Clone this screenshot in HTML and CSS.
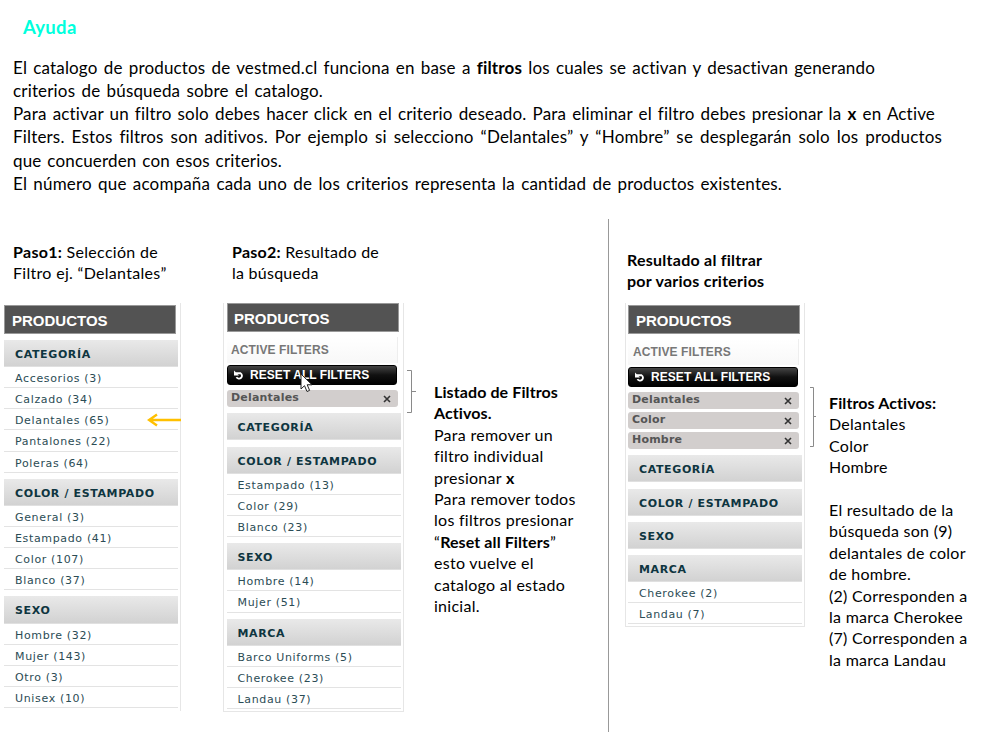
FILE: index.html
```html
<!DOCTYPE html>
<html lang="es">
<head>
<meta charset="utf-8">
<title>Ayuda</title>
<link rel="stylesheet" href="styles.css">
</head>
<body>
<h1>Ayuda</h1>
<div class="intro">
  <p class="w862">El catalogo de productos de vestmed.cl funciona en base a <b>filtros</b> los cuales se activan y desactivan generando</p>
  <p class="w310">criterios de búsqueda sobre el catalogo.</p>
  <p class="w922">Para activar un filtro solo debes hacer click en el criterio deseado. Para eliminar el filtro debes presionar la <b>x</b> en Active</p>
  <p class="w929">Filters. Estos filtros son aditivos. Por ejemplo si selecciono “Delantales” y “Hombre” se desplegarán solo los productos</p>
  <p class="w269">que concuerden con esos criterios.</p>
  <p class="w769">El número que acompaña cada uno de los criterios representa la cantidad de productos existentes.</p>
</div>

<main class="steps">
  <section class="step one">
    <h2><b>Paso1:</b> Selección de<br>Filtro ej. “Delantales”</h2>
    <div class="panel">
      <div class="title">PRODUCTOS</div>
      <div class="group"><h3>CATEGORÍA</h3>
        <ul><li>Accesorios (3)</li><li>Calzado (34)</li><li>Delantales (65)
          <svg class="arrow" width="34" height="14" viewBox="0 0 34 14"><path d="M34 7H2M10 1.500L2 7l8 5.500" fill="none" stroke="#ffc000" stroke-width="2.400"/></svg></li><li>Pantalones (22)</li><li>Poleras (64)</li></ul></div>
      <div class="group"><h3>COLOR / ESTAMPADO</h3>
        <ul><li>General (3)</li><li>Estampado (41)</li><li>Color (107)</li><li>Blanco (37)</li></ul></div>
      <div class="group"><h3>SEXO</h3>
        <ul><li>Hombre (32)</li><li>Mujer (143)</li><li>Otro (3)</li><li>Unisex (10)</li></ul></div>
    </div>
  </section>

  <section class="step two">
    <h2><b>Paso2:</b> Resultado de<br>la búsqueda</h2>
    <div class="panel">
      <div class="title">PRODUCTOS</div>
      <div class="active">ACTIVE FILTERS</div>
      <div class="reset"><svg width="11" height="11" viewBox="0 0 11 11"><path d="M1.500 3.200H6.500a2.900 2.900 0 1 1-4 3.900" fill="none" stroke="#fff" stroke-width="1.900"/><path d="M0 .6v5h5z" fill="#fff"/></svg><span>RESET ALL FILTERS</span>
        <svg class="cursor" width="13" height="20" viewBox="0 0 13 20"><path d="M1 1v15l3.500-3.300L7 18.500l2.600-1.100L7.200 11.800H12z" fill="#fff" stroke="#222"/></svg></div>
      <div class="chip"><span>Delantales</span><svg width="8" height="8" viewBox="0 0 8 8"><path d="M1 1l6 6M7 1L1 7" stroke="#333" stroke-width="1.600"/></svg></div>
      <div class="group"><h3>CATEGORÍA</h3></div>
      <div class="group"><h3>COLOR / ESTAMPADO</h3>
        <ul><li>Estampado (13)</li><li>Color (29)</li><li>Blanco (23)</li></ul></div>
      <div class="group"><h3>SEXO</h3>
        <ul><li>Hombre (14)</li><li>Mujer (51)</li></ul></div>
      <div class="group"><h3>MARCA</h3>
        <ul><li>Barco Uniforms (5)</li><li>Cherokee (23)</li><li>Landau (37)</li></ul></div>
    </div>
  </section>

  <aside class="note list">
    <svg class="bracket" width="9" height="43" viewBox="0 0 9 43"><path d="M0 .5H4.500V42.500H0M4.500 21.500H9" fill="none" stroke="#8a8a8a"/></svg>
    <div class="text"><p><b>Listado de Filtros</b></p><p><b>Activos.</b></p><p>Para remover un</p><p>filtro individual</p><p>presionar <b>x</b></p><p>Para remover todos</p><p>los filtros presionar</p><p>“<b>Reset all Filters</b>”</p><p>esto vuelve el</p><p>catalogo al estado</p><p>inicial.</p></div>
  </aside>

  <div class="divider"></div>

  <section class="step three">
    <h2><b>Resultado al filtrar<br>por varios criterios</b></h2>
    <div class="panel">
      <div class="title">PRODUCTOS</div>
      <div class="active">ACTIVE FILTERS</div>
      <div class="reset"><svg width="11" height="11" viewBox="0 0 11 11"><path d="M1.500 3.200H6.500a2.900 2.900 0 1 1-4 3.900" fill="none" stroke="#fff" stroke-width="1.900"/><path d="M0 .6v5h5z" fill="#fff"/></svg><span>RESET ALL FILTERS</span></div>
      <div class="chip"><span>Delantales</span><svg width="8" height="8" viewBox="0 0 8 8"><path d="M1 1l6 6M7 1L1 7" stroke="#333" stroke-width="1.600"/></svg></div>
      <div class="chip"><span>Color</span><svg width="8" height="8" viewBox="0 0 8 8"><path d="M1 1l6 6M7 1L1 7" stroke="#333" stroke-width="1.600"/></svg></div>
      <div class="chip"><span>Hombre</span><svg width="8" height="8" viewBox="0 0 8 8"><path d="M1 1l6 6M7 1L1 7" stroke="#333" stroke-width="1.600"/></svg></div>
      <div class="group"><h3>CATEGORÍA</h3></div>
      <div class="group"><h3>COLOR / ESTAMPADO</h3></div>
      <div class="group"><h3>SEXO</h3></div>
      <div class="group"><h3>MARCA</h3>
        <ul><li>Cherokee (2)</li><li>Landau (7)</li></ul></div>
    </div>
  </section>

  <aside class="note result">
    <svg class="bracket" width="7" height="60" viewBox="0 0 7 60"><path d="M0 .5H3.500V59.500H0M3.500 29.500H6" fill="none" stroke="#8a8a8a"/></svg>
    <div class="text"><p><b>Filtros Activos:</b></p><p>Delantales</p><p>Color</p><p>Hombre</p><p>&nbsp;</p><p>El resultado de la</p><p>búsqueda son (9)</p><p>delantales de color</p><p>de hombre.</p><p>(2) Corresponden a</p><p>la marca Cherokee</p><p>(7) Corresponden a</p><p>la marca Landau</p></div>
  </aside>
</main>
</body>
</html>
```
FILE: styles.css
```css
* { box-sizing: border-box; margin: 0; padding: 0; }
body { width: 987px; height: 744px; overflow: hidden; background: #fff; color: #000; font-family: Lato, "Liberation Sans", sans-serif; }
svg { display: block; flex: none; }
h1 { height: 56px; padding: 15px 0 0 23px; font-size: 18.500px; line-height: 24px; color: #0fd; letter-spacing: .3px; }

.intro { height: 163px; padding-left: 13px; font-size: 17px; line-height: 23.150px; letter-spacing: .17px; }
.intro p { white-space: nowrap; text-align-last: justify; }
.w862 { width: 862px; }
.w310 { width: 310px; }
.w922 { width: 922px; }
.w929 { width: 929px; }
.w269 { width: 269px; }
.w769 { width: 769px; }

.steps { display: grid; grid-template-columns: 223px 184px 201px 17px 185px 177px; height: 513px; }
.divider { border-left: 1px solid #999; }
h2 { height: 84px; padding: 22px 0 0 9px; font-size: 16px; line-height: 21px; font-weight: 400; letter-spacing: .25px; white-space: nowrap; }
.one h2 { padding-left: 13px; letter-spacing: .3px; }
.three h2 { padding: 30px 0 0 2px; }

.panel { border: 1px solid #e6e6e6; font-family: "DejaVu Sans", sans-serif; font-size: 11px; color: #2b4c55; }
.one .panel { width: 177px; height: 408px; margin-left: 4px; padding: 2px 2px 0 0; border-width: 0 1px 0 0; }
.two .panel { width: 181px; height: 409px; padding: 0 2px 0 3px; border-top: 0; }
.three .panel { width: 180px; height: 324px; padding: 2px 2px 0; border-top: 0; }

.title { width: 172px; height: 29px; padding-left: 7px; border: 1px solid #999; background: #535353; color: #fff; font: bold 15px/30px "Liberation Sans", sans-serif; }
.two .title { padding-left: 6px; line-height: 29px; }
.one .title { margin-bottom: 6px; }
.active { width: 171px; height: 26px; margin-top: 5px; padding-left: 5px; background: linear-gradient(#fff, #f8f8f8); border-right: 1px solid #eee; color: #777; font: bold 12px/26px "Liberation Sans", sans-serif; letter-spacing: .1px; }
.two .active { padding-left: 4px; }
.reset { position: relative; display: flex; align-items: center; gap: 5px; width: 170px; height: 20px; margin: 2px 0 5px; padding-left: 6px; border: 1px solid #000; border-radius: 3px; background: linear-gradient(#444, #111 50%, #000); color: #fff; font: bold 12px/18px "Liberation Sans", sans-serif; letter-spacing: .05px; white-space: nowrap; }
.cursor { position: absolute; left: 72px; top: 7px; z-index: 1; }
.chip { display: flex; align-items: center; justify-content: space-between; width: 171px; height: 17.300px; margin-bottom: 2.700px; padding: 0 7px 0 4px; border-radius: 3px; background: #d2cecd; color: #555; font-weight: 700; letter-spacing: .2px; }
.chip span { line-height: 15px; height: 17px; }
.chip svg { margin-top: 1px; }
.chip + .group { margin-top: 6px; }

.group { width: 174px; margin-bottom: 6.100px; }
.group h3 { height: 27.200px; padding-left: 11px; background: linear-gradient(#e9e9e9, #d2d2d2); border-bottom: 1px solid #e0e0e0; font-size: 11px; line-height: 29px; letter-spacing: .62px; color: #0e3540; white-space: nowrap; }
.group ul { list-style: none; }
.group li { position: relative; height: 21.100px; padding-left: 11px; border-bottom: 1px solid #e3e3e3; line-height: 23px; letter-spacing: .65px; white-space: nowrap; }
.two li, .two .group h3 { padding-left: 10.500px; }
.arrow { position: absolute; left: 143px; top: 4px; }

.note { display: flex; align-items: flex-start; }
.bracket { margin-top: 151px; }
.result .bracket { margin-top: 168px; }
.text { font-size: 16px; line-height: 21.400px; letter-spacing: .27px; white-space: nowrap; }
.text b { letter-spacing: .1px; }
.list .text { padding: 162px 0 0 18px; }
.result .text { padding: 173px 0 0 12px; }
```
